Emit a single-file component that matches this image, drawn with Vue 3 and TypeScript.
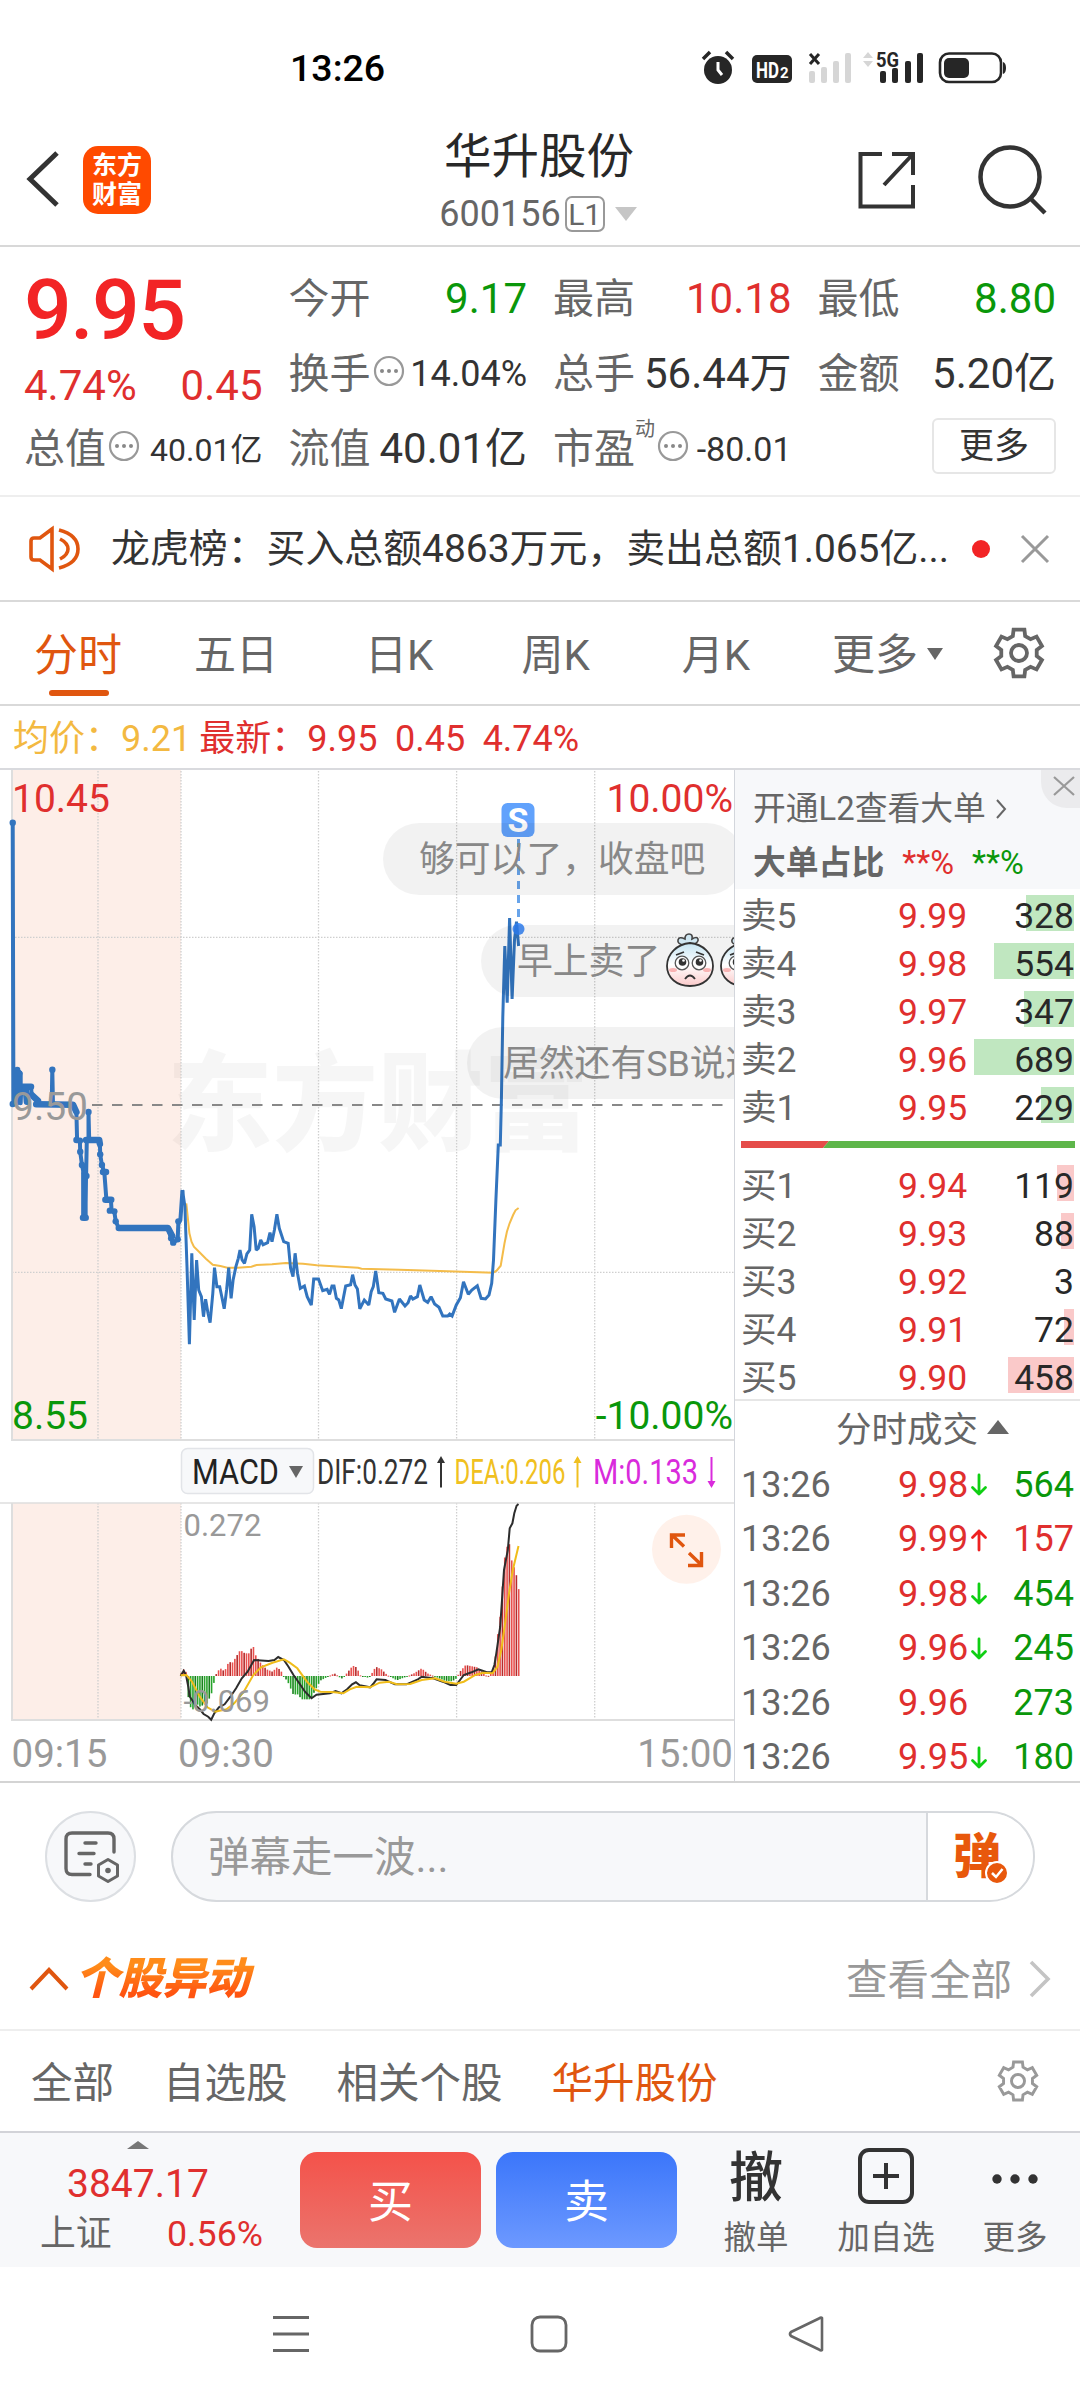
<script setup lang="ts">
type Point = [number, number]

interface Level { name: string; price: string; volume: number }
interface Trade { time: string; price: string; dir: 'up' | 'down' | ''; volume: number; tone: 'up' | 'down' }

const sells: Level[] = [
  { name: '卖5', price: '9.99', volume: 328 },
  { name: '卖4', price: '9.98', volume: 554 },
  { name: '卖3', price: '9.97', volume: 347 },
  { name: '卖2', price: '9.96', volume: 689 },
  { name: '卖1', price: '9.95', volume: 229 },
]
const buys: Level[] = [
  { name: '买1', price: '9.94', volume: 119 },
  { name: '买2', price: '9.93', volume: 88 },
  { name: '买3', price: '9.92', volume: 3 },
  { name: '买4', price: '9.91', volume: 72 },
  { name: '买5', price: '9.90', volume: 458 },
]
const barWidth = (v: number): string => (v < 10 ? 0 : (v / 689) * 100) + 'px'

const trades: Trade[] = [
  { time: '13:26', price: '9.98', dir: 'down', volume: 564, tone: 'down' },
  { time: '13:26', price: '9.99', dir: 'up', volume: 157, tone: 'up' },
  { time: '13:26', price: '9.98', dir: 'down', volume: 454, tone: 'down' },
  { time: '13:26', price: '9.96', dir: 'down', volume: 245, tone: 'down' },
  { time: '13:26', price: '9.96', dir: '', volume: 273, tone: 'down' },
  { time: '13:26', price: '9.95', dir: 'down', volume: 180, tone: 'down' },
]

const toPath = (pts: Point[], fx: (x: number) => number, fy: (y: number) => number): string =>
  pts.map(([x, y], i) => `${i ? 'L' : 'M'}${fx(x).toFixed(1)} ${fy(y).toFixed(1)}`).join('')

/* Price panel */
const px = (x: number): number => x / 2.904
const py = (y: number): number => 332 + y / 3

const auction: Point[] = [
  [37, -832], [39, 10], [50, -90], [60, -80], [60, 10], [62, -40], [90, -40], [92, -15], [105, 0], [110, 14],
  [150, 14], [152, -91], [154, 14], [212, 14], [222, 36], [224, 120], [232, 122], [233, 155], [238, 195],
  [243, 220], [245, 353], [250, 228], [252, 120], [257, 120], [257, 36], [259, 120], [284, 120], [290, 130],
  [291, 163], [296, 195], [303, 216], [309, 299], [322, 299], [324, 332], [332, 334], [336, 364], [345, 384],
  [488, 384], [497, 415], [503, 428], [516, 418], [518, 364], [524, 360], [530, 270],
]
const dots: Point[] = [
  [37, -832], [37, 12], [50, -90], [56, -80], [152, -91], [222, 120], [232, 122], [233, 155], [238, 195], [251, 228],
  [257, 36], [291, 163], [296, 195], [299, 216], [308, 216], [319, 332], [332, 334], [336, 364], [518, 364],
  [497, 415], [503, 428], [516, 418], [241, 353], [249, 353],
]
const flats: Point[][] = [
  [[62, -40], [90, -40]], [[92, -15], [110, 2]], [[105, 13], [212, 14], [222, 36]], [[250, 120], [288, 120], [290, 132]],
  [[306, 299], [323, 299]], [[345, 384], [488, 384], [500, 408]], [[245, 220], [245, 353]],
  [[52, -80], [54, 5]], [[75, -35], [78, 5]],
]
const price: Point[] = [
  [530, 270], [537, 320], [543, 500], [550, 733], [557, 460], [564, 660], [571, 480], [577, 570], [585, 590], [591, 650],
  [597, 598], [604, 640], [610, 668], [618, 580], [623, 503], [630, 560], [638, 560], [644, 590], [651, 626], [658, 570],
  [664, 503], [671, 595], [677, 540], [685, 500], [692, 475], [697, 450], [703, 480], [710, 490], [717, 462], [725, 450],
  [731, 343], [738, 380], [744, 450], [750, 445], [757, 420], [764, 434], [777, 428], [784, 398], [790, 425], [797, 390],
  [804, 343], [811, 385], [824, 425], [837, 430], [844, 505], [851, 530], [857, 460], [864, 520], [872, 565], [884, 558],
  [892, 590], [904, 615], [911, 537], [925, 537], [937, 572], [950, 568], [957, 583], [964, 558], [970, 558], [977, 595],
  [984, 600], [991, 626], [1004, 558], [1018, 554], [1024, 524], [1031, 555], [1038, 567], [1045, 626], [1058, 600],
  [1071, 615], [1078, 575], [1084, 560], [1091, 513], [1100, 578], [1112, 580], [1120, 597], [1138, 603], [1146, 637],
  [1160, 597], [1176, 618], [1185, 608], [1192, 588], [1199, 597], [1212, 590], [1219, 555], [1232, 600], [1242, 607],
  [1252, 590], [1262, 612], [1275, 622], [1286, 648], [1300, 648], [1306, 642], [1313, 648], [1325, 615], [1337, 593],
  [1346, 545], [1360, 583], [1370, 570], [1386, 557], [1397, 595], [1410, 597], [1420, 585], [1428, 550], [1433, 480],
  [1440, 300], [1447, 135], [1453, 135], [1456, 0], [1460, -250], [1466, -462], [1473, -292], [1480, -546], [1487, -303],
  [1494, -480], [1500, -535], [1506, -462],
]
const average: Point[] = [
  [541, 310], [545, 350], [550, 400], [556, 425], [563, 440], [575, 452], [598, 476], [618, 494], [640, 498], [660, 503],
  [690, 503], [730, 500], [745, 495], [790, 493], [830, 489], [880, 491], [920, 496], [1040, 503], [1050, 506], [1160, 509],
  [1300, 514], [1432, 518], [1442, 512], [1454, 497], [1465, 430], [1472, 395], [1480, 370], [1490, 345], [1497, 331], [1506, 324],
]
const auctionPath = toPath(auction, px, py)
const flatPaths = flats.map((f) => toPath(f, px, py))
const pricePath = toPath(price, px, py)
const averagePath = toPath(average, px, py)

/* MACD panel */
const mx = (u: number): number => 150 + u / 2.613
const my = (v: number): number => 652 + v / 3

const envelope: Point[] = [
  [80, 762], [88, 748], [94, 755], [97, 766], [98, 800], [103, 870], [109, 855], [115, 878], [121, 850], [130, 860],
  [150, 850], [157, 830], [165, 810], [169, 770], [176, 757], [182, 746], [188, 746], [194, 755], [200, 742], [207, 722],
  [213, 732], [220, 720], [236, 690], [248, 700], [260, 700], [266, 681], [271, 681], [276, 705], [290, 730], [305, 748],
  [320, 755], [333, 741], [345, 757], [350, 770], [360, 785], [375, 825], [385, 822], [397, 838], [420, 838], [430, 815],
  [445, 782], [462, 772], [470, 767], [482, 760], [492, 768], [500, 777], [510, 766], [530, 737], [540, 742], [550, 766],
  [572, 774], [581, 758], [590, 740], [605, 748], [620, 765], [645, 781], [675, 768], [690, 760], [710, 745], [725, 760],
  [745, 770], [770, 782], [790, 784], [800, 776], [810, 755], [825, 735], [855, 742], [870, 758], [882, 770], [892, 760],
  [900, 740], [910, 630], [915, 590], [921, 500], [928, 400], [938, 362], [945, 420], [951, 440], [957, 462], [965, 517],
]
const levelAt = (u: number): number => {
  for (let i = 1; i < envelope.length; i++) {
    const [x0, y0] = envelope[i - 1]
    const [x1, y1] = envelope[i]
    if (u <= x1) return y0 + ((y1 - y0) * (u - x0)) / (x1 - x0)
  }
  return 517
}
const zero = 768
const bars = Array.from({ length: 146 }, (_, i) => {
  const u = 82 + i * 6.08
  const v = levelAt(u)
  const up = v < zero
  return { x: mx(u) - 0.85, y: my(Math.min(v, zero)), h: Math.max(Math.abs(v - zero) / 3, 1), color: up ? (i % 3 ? '#e8504e' : '#b52c2c') : (i % 3 ? '#27a32b' : '#18801c') }
})
const dif: Point[] = [
  [80, 768], [88, 752], [94, 765], [100, 800], [104, 830], [110, 840], [118, 855], [130, 868], [140, 882], [152, 890],
  [160, 899], [168, 880], [180, 862], [195, 853], [210, 830], [225, 805], [240, 775], [255, 755], [272, 720], [310, 723],
  [325, 720], [335, 711], [350, 720], [362, 740], [375, 765], [390, 790], [405, 815], [422, 835], [435, 824], [470, 820],
  [485, 813], [500, 820], [515, 808], [528, 793], [538, 787], [548, 796], [575, 802], [583, 792], [592, 778], [615, 780],
  [640, 793], [670, 793], [700, 778], [710, 770], [740, 775], [765, 785], [785, 795], [800, 795], [820, 765], [840, 757],
  [858, 748], [880, 757], [893, 756], [900, 735], [905, 700], [915, 620], [925, 450], [935, 390], [940, 325], [947, 310],
  [952, 280], [958, 257], [963, 252],
]
const dea: Point[] = [
  [80, 766], [95, 765], [110, 785], [130, 830], [150, 862], [170, 875], [200, 868], [220, 850], [245, 815], [270, 765],
  [290, 742], [320, 728], [350, 718], [365, 728], [385, 745], [410, 785], [430, 808], [445, 815], [475, 816], [505, 820],
  [522, 808], [540, 800], [575, 802], [600, 788], [625, 785], [645, 793], [680, 792], [710, 780], [745, 775], [770, 785],
  [800, 791], [820, 785], [850, 765], [870, 758], [895, 760], [908, 740], [918, 690], [928, 610], [938, 520], [948, 450], [963, 378],
]
const difPath = toPath(dif, mx, my)
const deaPath = toPath(dea, mx, my)
const gridX = [181, 318.5, 456.6, 594.7]

/* Six-tooth gear centred on the origin */
const gear = (() => {
  const out: string[] = []
  const at = (r: number, deg: number): string => {
    const a = (deg * Math.PI) / 180
    return `${(r * Math.sin(a)).toFixed(2)} ${(-r * Math.cos(a)).toFixed(2)}`
  }
  for (let k = 0; k < 6; k++) {
    const c = k * 60
    out.push(at(18, c - 20), at(24, c - 13), at(24, c + 13), at(18, c + 20))
  }
  return 'M' + out.join('L') + 'Z'
})()
</script>

<template>
  <div class="screen">
    <div class="status">
      <span class="clock">13:26</span>
      <svg class="status-icons" width="310" height="36" viewBox="0 0 310 36">
        <g fill="#262626">
          <circle cx="18" cy="20" r="14" />
          <path d="M3 9L10 2M26 2l7 7" stroke="#262626" stroke-width="3.5" />
          <path d="M18 12v8l4 5" stroke="#fff" stroke-width="3" fill="none" />
          <rect x="52" y="5" width="40" height="28" rx="5" />
        </g>
        <text x="56" y="28" font-size="22" font-weight="700" fill="#fff" textLength="23" lengthAdjust="spacingAndGlyphs">HD</text>
        <text x="80" y="28" font-size="15" font-weight="700" fill="#fff">2</text>
        <path d="M110 4l9 10m0-10l-9 10" stroke="#262626" stroke-width="3" />
        <g fill="#d6d6d6">
          <rect x="109" y="21" width="6" height="12" rx="2" /><rect x="121" y="17" width="6" height="16" rx="2" />
          <rect x="133" y="11" width="6" height="22" rx="2" /><rect x="145" y="3" width="6" height="30" rx="2" />
          <path d="M163 8l5-6 5 6zM163 11l5 6 5-6z" />
        </g>
        <text x="176" y="17" font-size="20" font-weight="700" fill="#262626" textLength="23" lengthAdjust="spacingAndGlyphs">5G</text>
        <g fill="#262626">
          <rect x="180" y="21" width="6" height="12" rx="2" /><rect x="192" y="18" width="6" height="15" rx="2" />
          <rect x="205" y="11" width="6" height="22" rx="2" /><rect x="217" y="3" width="6" height="30" rx="2" />
          <rect x="244" y="8" width="25" height="20" rx="5" /><path d="M303 12q3 1 3 6t-3 6z" />
        </g>
        <rect x="240" y="3.5" width="61" height="28.5" rx="9" fill="none" stroke="#262626" stroke-width="2.6" />
      </svg>
    </div>

    <header class="header">
      <svg class="back" width="34" height="60" viewBox="0 0 34 60"><path d="M31 4L4 30l27 26" fill="none" stroke="#333" stroke-width="5" /></svg>
      <div class="logo"><span>东方</span><span>财富</span></div>
      <div class="title">
        <div class="name">华升股份</div>
        <div class="code"><span>600156</span><i>L1</i><b></b></div>
      </div>
      <svg class="share" width="60" height="60" viewBox="0 0 60 60" fill="none" stroke="#333" stroke-width="4">
        <path d="M25 4H3.500v52.500H56V35M35 4h21v21M56 4L27 35" />
      </svg>
      <svg class="search" width="72" height="72" viewBox="0 0 72 72" fill="none" stroke="#333" stroke-width="4.500">
        <circle cx="33" cy="33" r="29.500" /><path d="M53 54l15 15" />
      </svg>
    </header>

    <section class="quote">
      <div class="big">9.95</div>
      <div class="cell"><span>今开</span><em class="down">9.17</em></div>
      <div class="cell"><span>最高</span><em class="up">10.18</em></div>
      <div class="cell"><span>最低</span><em class="down">8.80</em></div>
      <div class="cell"><span>换手</span><svg class="more-dot" width="32" height="32" viewBox="0 0 32 32"><circle cx="16" cy="16" r="14" fill="none" stroke="#999" stroke-width="2.200" /><g fill="#888"><circle cx="9" cy="16" r="2" /><circle cx="16" cy="16" r="2" /><circle cx="23" cy="16" r="2" /></g></svg><em class="mid">14.04%</em></div>
      <div class="cell"><span>总手</span><em>56.44万</em></div>
      <div class="cell"><span>金额</span><em>5.20亿</em></div>
      <div class="change up"><span>4.74%</span><span>0.45</span></div>
      <div class="cell"><span>总值</span><svg class="more-dot" width="32" height="32" viewBox="0 0 32 32"><circle cx="16" cy="16" r="14" fill="none" stroke="#999" stroke-width="2.200" /><g fill="#888"><circle cx="9" cy="16" r="2" /><circle cx="16" cy="16" r="2" /><circle cx="23" cy="16" r="2" /></g></svg><em class="small">40.01亿</em></div>
      <div class="cell"><span>流值</span><em>40.01亿</em></div>
      <div class="cell"><span>市盈</span><sup>动</sup><svg class="more-dot" width="32" height="32" viewBox="0 0 32 32"><circle cx="16" cy="16" r="14" fill="none" stroke="#999" stroke-width="2.200" /><g fill="#888"><circle cx="9" cy="16" r="2" /><circle cx="16" cy="16" r="2" /><circle cx="23" cy="16" r="2" /></g></svg><em class="pe">-80.01</em></div>
      <div class="cell"><button class="more">更多</button></div>
    </section>

    <section class="notice">
      <svg width="54" height="48" viewBox="0 0 54 48" fill="none" stroke="#e0560f" stroke-width="3.600">
        <path d="M24 4L12 13H6q-3 0-3 3v16q0 3 3 3h6l12 9zM32 14q8 4 8 10t-8 10M31 5q19 5 19 19T31 43" />
      </svg>
      <p>龙虎榜：买入总额4863万元，卖出总额1.065亿...</p>
      <i></i>
      <svg width="30" height="30" viewBox="0 0 30 30"><path d="M2 2l26 26m0-26L2 28" stroke="#999" stroke-width="3" /></svg>
    </section>

    <nav class="tabs">
      <span class="on">分时</span><span class="t2">五日</span><span class="t3">日K</span><span class="t4">周K</span><span class="t5">月K</span>
      <span class="drop">更多<b></b></span>
      <svg width="54" height="54" viewBox="-27 -27 54 54" fill="none" stroke="#666" stroke-width="3.800"><path :d="gear" /><circle r="8" /></svg>
    </nav>

    <div class="legend"><span class="avg">均价：</span><span class="avg v1">9.21</span><span>最新：</span><span class="v2">9.95</span><span class="v3">0.45</span><span>4.74%</span></div>

    <main class="market">
      <div class="chart">
        <svg width="734" height="1014" viewBox="0 0 734 1014">
          <rect x="12" y="0" width="169" height="672" fill="#fdeee8" />
          <rect x="12" y="735" width="169" height="217" fill="#fdeee8" />
          <text x="167" y="374" font-size="108" font-weight="900" fill="#000" opacity=".03" textLength="422" lengthAdjust="spacingAndGlyphs">东方财富</text>
          <g stroke="#cfcfcf" stroke-width="1.300" stroke-dasharray="1.500 1.500">
            <path d="M98 0V672M98 735V952" />
            <path v-for="x in gridX" :key="x" :d="`M${x} 0V672M${x} 735V952`" />
            <path d="M12 169.300H734M12 504.300H734" />
          </g>
          <g stroke="#dedede" stroke-width="2"><path d="M12 0V672H734M12 735V952H734" fill="none" /><path d="M0 735H734" stroke-width="1.300" /></g>
          <path d="M92 337H732" stroke="#888" stroke-width="2" stroke-dasharray="10.500 9.500" />
          <path :d="averagePath" fill="none" stroke="#f4bc4a" stroke-width="2" />
          <g fill="none" stroke="#3274be" stroke-linejoin="round">
            <path :d="auctionPath" stroke-width="4" />
            <path v-for="(f, i) in flatPaths" :key="i" :d="f" stroke-width="6.500" stroke-linecap="round" />
            <path :d="pricePath" stroke-width="3" stroke-linejoin="miter" stroke-miterlimit="2" />
          </g>
          <circle v-for="(d, i) in dots" :key="i" :cx="px(d[0])" :cy="py(d[1])" r="3.200" fill="#3274be" />
          <path d="M518.500 71V150" stroke="#68a4ea" stroke-width="3" stroke-dasharray="8 6" />
          <circle cx="518.500" cy="161" r="6" fill="#2f80f5" opacity=".85" />
          <rect x="501.500" y="35" width="33" height="34" rx="6" fill="#61a2fc" />
          <text x="518" y="64" font-size="34" font-weight="700" fill="#fff" text-anchor="middle">S</text>

          <g font-size="39">
            <text x="12" y="43.500" fill="#e02f2e">10.45</text>
            <text x="733" y="43.500" fill="#e02f2e" text-anchor="end">10.00%</text>
            <text x="12" y="352" fill="#999">9.50</text>
            <text x="12" y="661" fill="#0a970a">8.55</text>
            <text x="733" y="661" fill="#0a970a" text-anchor="end">-10.00%</text>
          </g>

          <rect x="181.500" y="680.500" width="132" height="45" rx="6" fill="#f7f8fa" stroke="#e2e4e8" stroke-width="1.500" />
          <path d="M289 698h14l-7 12z" fill="#666" />
          <g font-size="35">
            <text x="192" y="715.500" fill="#222" textLength="87" lengthAdjust="spacingAndGlyphs">MACD</text>
            <text x="317" y="715.500" fill="#333" textLength="111" lengthAdjust="spacingAndGlyphs">DIF:0.272</text>
            <text x="454.500" y="715.500" fill="#f0c020" textLength="111" lengthAdjust="spacingAndGlyphs">DEA:0.206</text>
            <text x="593" y="715.500" fill="#d92bdc" textLength="105" lengthAdjust="spacingAndGlyphs">M:0.133</text>
          </g>
          <g stroke-width="2">
            <path d="M441 719.500V690" stroke="#333" /><path d="M437 695l4-7 4 7z" fill="#333" />
            <path d="M577.500 719.500V690" stroke="#f0c020" /><path d="M573.500 695l4-7 4 7z" fill="#f0c020" />
            <path d="M711.500 689V718" stroke="#d92bdc" /><path d="M707.500 713l4 7 4-7z" fill="#d92bdc" />
          </g>

          <rect v-for="(b, i) in bars" :key="i" :x="b.x" :y="b.y" width="1.600" :height="b.h" :fill="b.color" />
          <path :d="difPath" fill="none" stroke="#2d2d2d" stroke-width="2" />
          <path :d="deaPath" fill="none" stroke="#f0bd1a" stroke-width="2" />
          <g font-size="31" fill="#999"><text x="183.500" y="768">0.272</text><text x="183.500" y="944">-0.069</text></g>
          <circle cx="686.500" cy="781.300" r="34.500" fill="#fff1ea" />
          <path d="M684 778.500L672 767M671.500 780V767H685M689 785l12 11.500M688 797.500h13.500V784" fill="none" stroke="#e0560f" stroke-width="3.400" />
          <g font-size="38.500" fill="#999">
            <text x="11.500" y="998.500">09:15</text><text x="178" y="998.500">09:30</text><text x="733" y="998.500" text-anchor="end">15:00</text>
          </g>
        </svg>
        <div class="bubble b1">够可以了，收盘吧</div>
        <div class="bubble b2">早上卖了
          <svg v-for="n in 2" :key="n" width="50" height="56" viewBox="0 0 50 56">
            <defs><linearGradient id="face" x1="0" y1="0" x2="0" y2="1"><stop offset="0" stop-color="#c4e4f2" /><stop offset=".5" stop-color="#fff" /><stop offset="1" stop-color="#fbcaca" /></linearGradient></defs>
            <path d="M19 13q-7-1-6-5t7-1q0-5 4-5t3 5q5-3 6 0t-5 6" fill="#cfe7f2" stroke="#444" stroke-width="1.600" />
            <path d="M25 11C38 12 48 22 48 34S38 54 25 54 2 46 2 34 12 12 25 11z" fill="url(#face)" stroke="#333" stroke-width="1.800" />
            <g fill="#fff" stroke="#555" stroke-width="1.300"><circle cx="17" cy="31" r="6.800" /><circle cx="34" cy="31" r="6.800" /></g>
            <g fill="#333"><circle cx="17.500" cy="30" r="3.800" /><circle cx="34.500" cy="30" r="3.800" /></g>
            <g fill="#fff"><circle cx="18.500" cy="28.500" r="1.300" /><circle cx="35.500" cy="28.500" r="1.300" /></g>
            <path d="M11 23l8-3M31 20l8 3M20 47q5-7 10 0" fill="none" stroke="#333" stroke-width="1.800" />
            <g fill="#f79a9a" opacity=".7"><ellipse cx="8" cy="38" rx="4" ry="2" /><ellipse cx="42" cy="38" rx="4" ry="2" /></g>
          </svg>
        </div>
        <div class="bubble b3">居然还有SB说这</div>
      </div>

      <aside class="book">
        <div class="l2">
          <div class="l2-link">开通L2查看大单<svg width="12" height="22" viewBox="0 0 12 22"><path d="M2 2l8 9-8 9" fill="none" stroke="#666" stroke-width="2" /></svg></div>
          <div class="l2-ratio"><b>大单占比</b><span class="up">**%</span><span class="down">**%</span></div>
          <div class="close"><svg width="22" height="20" viewBox="0 0 22 20"><path d="M1 1l20 18M21 1L1 19" stroke="#999" stroke-width="2.200" /></svg></div>
        </div>
        <div v-for="r in sells" :key="r.name" class="level">
          <span>{{ r.name }}</span><span class="up">{{ r.price }}</span><i class="g" :style="{ width: barWidth(r.volume) }"></i><em>{{ r.volume }}</em>
        </div>
        <svg class="split" width="334" height="7" viewBox="0 0 334 7"><path d="M0 0H88L82 7H0z" fill="#e54c49" /><path d="M88 0H334V7H82z" fill="#5eb64a" /></svg>
        <div v-for="r in buys" :key="r.name" class="level">
          <span>{{ r.name }}</span><span class="up">{{ r.price }}</span><i class="r" :style="{ width: barWidth(r.volume) }"></i><em>{{ r.volume }}</em>
        </div>
        <div class="deal-head">分时成交<b></b></div>
        <div v-for="(t, i) in trades" :key="i" class="trade">
          <span>{{ t.time }}</span><span class="up">{{ t.price }}</span>
          <svg width="18" height="24" viewBox="0 0 18 24" fill="none" stroke-width="2.800" stroke-linecap="round" stroke-linejoin="round">
            <path v-if="t.dir === 'down'" d="M9 2v19M2.500 14.500L9 21l6.500-6.500" stroke="#0fcf13" />
            <path v-if="t.dir === 'up'" d="M9 22V3M2.500 9.500L9 3l6.500 6.500" stroke="#ee2222" />
          </svg>
          <em :class="t.tone">{{ t.volume }}</em>
        </div>
      </aside>
    </main>

    <section class="danmu">
      <div class="round">
        <svg width="58" height="54" viewBox="0 0 58 54" fill="none" stroke="#666" stroke-width="3.400" stroke-linecap="round">
          <path d="M26 43.500H8q-6 0-6-6V8q0-6 6-6h36q6 0 6 6v13" /><path d="M21 12h11M15 22.500h15M21 33h6" />
          <path d="M44 28.500l9.500 5.500v11L44 50.500 34.500 45V34z" stroke-linejoin="round" stroke-width="3" /><circle cx="44" cy="39.500" r="2.800" fill="#666" stroke="none" />
        </svg>
      </div>
      <div class="field">
        <span>弹幕走一波...</span>
        <div class="send">弹<svg width="24" height="24" viewBox="0 0 24 24"><circle cx="12" cy="12" r="11" fill="#e8580c" stroke="#fff" stroke-width="2" /><path d="M7 12l4 4 6.500-8" fill="none" stroke="#fff" stroke-width="2.500" /></svg></div>
      </div>
    </section>

    <section class="moves">
      <svg width="40" height="26" viewBox="0 0 40 26"><path d="M2 23L20 4l18 19" fill="none" stroke="#e0560f" stroke-width="4" /></svg>
      <h2>个股异动</h2>
      <span>查看全部</span>
      <svg width="24" height="40" viewBox="0 0 24 40"><path d="M3 3l17 17L3 37" fill="none" stroke="#c4c4c4" stroke-width="3.600" /></svg>
    </section>

    <nav class="filters">
      <span>全部</span><span>自选股</span><span>相关个股</span><span class="on">华升股份</span>
      <svg width="44" height="44" viewBox="-27 -27 54 54" fill="none" stroke="#999" stroke-width="3.600"><path :d="gear" /><circle r="8" /></svg>
    </nav>

    <footer class="bar">
      <div class="index">
        <b></b>
        <div class="up">3847.17</div>
        <p><span>上证</span><span class="up">0.56%</span></p>
      </div>
      <button class="buy">买</button>
      <button class="sell">卖</button>
      <div class="act a1"><strong>撤</strong><span>撤单</span></div>
      <div class="act a2"><svg width="58" height="58" viewBox="0 0 58 58" fill="none" stroke="#333" stroke-width="4"><rect x="3" y="3" width="52" height="52" rx="9" /><path d="M29 16v26M16 29h26" /></svg><span>加自选</span></div>
      <div class="act a3"><svg width="58" height="58" viewBox="0 0 58 58" fill="#333"><circle cx="11" cy="32" r="4.700" /><circle cx="29" cy="32" r="4.700" /><circle cx="47" cy="32" r="4.700" /></svg><span>更多</span></div>
    </footer>

    <div class="sysnav">
      <svg width="40" height="40" viewBox="0 0 40 40" stroke="#666" stroke-width="3"><path d="M2 3.500h36M2 20h36M2 36.500h36" /></svg>
      <svg width="40" height="40" viewBox="0 0 40 40" fill="none" stroke="#666" stroke-width="2.800"><rect x="3" y="3" width="34" height="34" rx="8" /></svg>
      <svg width="40" height="40" viewBox="0 0 40 40" fill="none" stroke="#666" stroke-width="2.600" stroke-linejoin="round"><path d="M36 4v32q-1 1-3-.500L5 22q-2-2 0-4L33 4.500q2-1.500 3-.500z" /></svg>
    </div>
  </div>
</template>

<style>
body { margin: 0; background: #fff; }
</style>

<style scoped>
.screen {
  width: 1080px; height: 2400px; overflow: hidden; background: #fff; color: #333; line-height: 1.25;
  font-family: Roboto, "Noto Sans CJK SC", sans-serif; display: flex; flex-direction: column;
}
.screen * { box-sizing: border-box; }
.screen > * { flex: none; }
svg { display: block; flex: none; }
em, i { font-style: normal; }
p, h2 { margin: 0; }
button { font-family: inherit; border: 0; padding: 0; }
.up { color: #e02f2e !important; }
.down { color: #0a970a !important; }

.status { height: 120px; padding: 16px 64px 0 290px; display: flex; align-items: center; justify-content: space-between; }
.clock { font-size: 37.500px; font-weight: 500; color: #000; }
.status-icons { margin-right: 6px; }

.header { height: 127px; border-bottom: 2px solid #d8d8d8; display: flex; padding: 0 31px 0 26px; align-items: flex-start; }
.back { margin-top: 29px; }
.logo {
  margin: 26px 0 0 23px; width: 68px; height: 68px; border-radius: 15px; background: #ff4a00; color: #fff; font-weight: 700;
  font-size: 25px; line-height: 29px; display: flex; flex-direction: column; align-items: center; justify-content: center;
}
.title { flex: 1; display: flex; flex-direction: column; align-items: center; padding-left: 70px; }
.name { font-size: 47.500px; line-height: 60px; margin-top: 7px; color: #282828; }
.code { display: flex; align-items: center; font-size: 36px; line-height: 40px; color: #666; margin-top: 7px; padding-right: 2px; }
.code i { border: 2px solid #999; border-radius: 7px; width: 40px; height: 36px; line-height: 33px; font-size: 30px; text-align: center; margin-left: 4px; }
.code b { border: 11px solid transparent; border-top: 14px solid #c6c6c6; border-bottom: 0; margin-left: 10px; }
.share { margin: 30px 60px 0 0; }
.search { margin-top: 24px; }

.quote {
  height: 250px; border-bottom: 2px solid #eee; padding: 15px 24px 0; display: grid; position: relative;
  grid-template-columns: repeat(4, 1fr); column-gap: 26px; grid-template-rows: 75px 75px 75px;
}
.quote .cell { display: flex; align-items: center; font-size: 41px; min-width: 0; }
.quote .cell > span { color: #666; }
.quote .cell > em { margin-left: auto; font-size: 42px; white-space: nowrap; }
.quote .cell > em.mid { font-size: 36px; }
.quote .cell > em.small { font-size: 32px; }
.quote .cell > em.pe { font-size: 34px; }
.quote .cell:nth-child(7) { grid-column: 4; }
.quote .cell:nth-child(5) { grid-column: 2; grid-row: 2; }
.big { color: #f22425; font-weight: 500; font-size: 84px; line-height: 98px; grid-column: 1; grid-row: 1; letter-spacing: -1.500px; }
.change { grid-column: 1; grid-row: 2; display: flex; justify-content: space-between; font-size: 42px; line-height: 98px; }
.more-dot { margin: -8px 0 0 2px; }
.quote sup { font-size: 20px; line-height: 20px; color: #666; align-self: flex-start; margin: 7px 0 0 0; width: 21px; }
.quote sup + .more-dot { margin-left: 1px; }
.more { margin-left: auto; margin-bottom: 7px; width: 124px; height: 56px; border: 2px solid #e6e6e6; border-radius: 6px; background: #fff; font-size: 35px; color: #333; line-height: 53px; }

.notice { height: 105px; border-bottom: 2px solid #d9d9d9; display: flex; align-items: center; padding: 0 30px 0 28px; }
.notice p { font-size: 38.900px; margin-left: 29px; white-space: nowrap; flex: 1; padding-top: 2px; }
.notice i { width: 18px; height: 18px; border-radius: 50%; background: #f22425; margin-right: 30px; }

.tabs { height: 104px; border-bottom: 2px solid #d9d9d9; display: flex; align-items: center; padding: 0 34px; font-size: 42px; color: #666; position: relative; }
.tabs span { white-space: nowrap; padding-top: 6px; }
.tabs .on { color: #e0560f; font-size: 44px; position: relative; margin-right: 72px; }
.tabs .on::after { content: ""; position: absolute; left: 15px; bottom: -12px; width: 60px; height: 6px; border-radius: 3px; background: #e0560f; }
.tabs .t2 { margin-right: 87px; }
.tabs .t3 { margin-right: 88px; }
.tabs .t4 { margin-right: 92px; }
.tabs .t5 { margin-right: 82px; }
.tabs .drop { display: flex; align-items: center; margin: 0; font-size: 43px; }
.tabs .drop b { border: 8px solid transparent; border-top: 12px solid #666; border-bottom: 0; margin: -5px 0 0 9px; }
.tabs svg { margin-left: auto; }

.legend { height: 62px; display: flex; align-items: center; padding: 4px 0 0 13px; font-size: 36px; color: #e02f2e; white-space: nowrap; }
.legend .avg { color: #f3b941; }
.legend .v1 { margin-right: 8px; }
.legend .v2, .legend .v3 { margin-right: 17.500px; }

.market { height: 1015px; display: flex; border-top: 2px solid #d9dade; border-bottom: 2px solid #d4d4d4; }
.chart { width: 735px; border-right: 1.500px solid #d3d6dc; position: relative; overflow: hidden; }
.chart > svg { margin-top: -2px; }
.bubble { position: absolute; height: 72px; border-radius: 36px; background: rgba(0, 0, 0, .05); color: #888; font-size: 35.800px; line-height: 70px; white-space: nowrap; display: flex; align-items: center; padding-top: 2px; }
.b1 { left: 383px; top: 53px; width: 360px; padding-left: 36px; }
.b2 { left: 481px; top: 155px; width: 340px; padding-left: 36px; gap: 4px; }
.b2 svg:first-of-type { margin-left: 1px; }
.b2 svg { margin-top: -4px; }
.b3 { left: 467px; top: 257px; width: 340px; padding-left: 36px; }

.book { flex: 1; display: flex; flex-direction: column; overflow: hidden; }
.book > * { flex: none; }
.l2 { height: 119px; margin-bottom: 2px; background: #f7f8fa; position: relative; padding: 13px 0 0 18px; color: #666; font-size: 32.800px; }
.l2-link { display: flex; align-items: center; height: 52px; gap: 9px; }
.l2-ratio { display: flex; align-items: center; height: 57px; gap: 18px; }
.l2-ratio span { font-size: 32.500px; }
.close { position: absolute; right: 0; top: 0; width: 39px; height: 38px; border-bottom-left-radius: 26px; background: #ebebed; padding: 6px 0 0 12px; }
.level { height: 48px; display: flex; align-items: center; padding: 2px 6px 0 6px; font-size: 35.500px; color: #666; position: relative; }
.level > span:first-child, .trade > span:first-child { width: 157px; white-space: nowrap; }
.level i { position: absolute; right: 6px; top: 4px; height: 36px; }
.level i.g { background: #c0e7c0; }
.level i.r { background: #fac9c9; }
.level em { margin-left: auto; color: #282828; position: relative; }
.split { margin: 10px 0 13px 6px; }
.deal-head { height: 58px; border-top: 2px solid #e6e6e6; display: flex; align-items: center; justify-content: center; font-size: 35.500px; color: #666; margin-top: -2px; padding: 3px 0 0 30px; }
.deal-head b { border: 11px solid transparent; border-bottom: 14px solid #666; border-top: 0; margin: -8px 0 0 9px; }
.trade { height: 54.500px; display: flex; align-items: center; padding: 2px 6px 0 6px; font-size: 36px; color: #666; }
.trade svg { margin-left: 2px; }
.trade em { margin-left: auto; }

.danmu { height: 146px; display: flex; align-items: center; padding: 0 45px; gap: 35px; }
.round { width: 91px; height: 91px; border-radius: 50%; background: #f7f8fa; border: 2px solid #dcdfe3; display: flex; align-items: center; justify-content: center; padding: 3px 0 0 4px; }
.field { flex: 1; height: 91px; border-radius: 46px; border: 2px solid #d6d9dd; background: #f7f8fa; display: flex; align-items: center; overflow: hidden; padding-left: 35px; font-size: 41.500px; color: #999; }
.field span { flex: 1; padding-top: 4px; }
.send { width: 107px; height: 100%; background: #fff; border-left: 2px solid #d6d9dd; color: #e8580c; font-weight: 900; font-size: 48px; line-height: 87px; padding-left: 25px; position: relative; }
.send svg { position: absolute; left: 57px; top: 48px; }

.moves { height: 102px; border-bottom: 2px solid #eee; display: flex; align-items: center; padding: 0 28px 0 29px; }
.moves h2 { font-size: 44px; font-weight: 900; font-style: italic; margin-left: 6px; letter-spacing: -.5px; padding-right: 8px; background: linear-gradient(#ff8c1a 25%, #ff5410 75%); -webkit-background-clip: text; background-clip: text; color: transparent; }
.moves span { margin-left: auto; margin-right: 16px; font-size: 41.500px; color: #999; padding-top: 4px; }

.filters { height: 102px; border-bottom: 2px solid #d2d3d8; display: flex; align-items: center; padding: 0 40px 0 31px; gap: 49px; font-size: 41.500px; color: #666; }
.filters span { padding-top: 6px; }
.filters .on { color: #e0560f; }
.filters svg { margin-left: auto; }

.bar { height: 134px; background: #f7f8fa; display: flex; }
.index { width: 300px; padding: 8px 37px 0 40px; display: flex; flex-direction: column; }
.index > b { border: 11px solid transparent; border-bottom: 8px solid #777; border-top: 0; margin-left: 87px; width: 0; }
.index > div { font-size: 39px; line-height: 46px; margin: 12px 0 0 27px; }
.index p { display: flex; justify-content: space-between; align-items: center; font-size: 35.800px; line-height: 46px; color: #666; margin-top: 4px; }
.bar button { width: 181px; height: 96px; margin: 19px 15px 0 0; border-radius: 17px; color: #fff; font-size: 45px; line-height: 101px; }
.buy { background: linear-gradient(#f4524a, #eb746d); }
.sell { background: linear-gradient(#3b76fa, #6d99ff); }
.act { display: flex; flex-direction: column; align-items: center; font-size: 32.500px; color: #666; padding-top: 14px; }
.act strong { font-size: 54px; line-height: 63px; height: 58px; font-weight: 500; color: #333; }
.act span { line-height: 44px; margin-top: 11px; white-space: nowrap; }
.a1 { width: 66px; margin-left: 31px; }
.a2 { width: 98px; margin-left: 48px; }
.a3 { width: 66px; margin-left: 47px; }

.sysnav { height: 133px; display: flex; align-items: center; padding: 0 254px 0 271px; justify-content: space-between; }
</style>
